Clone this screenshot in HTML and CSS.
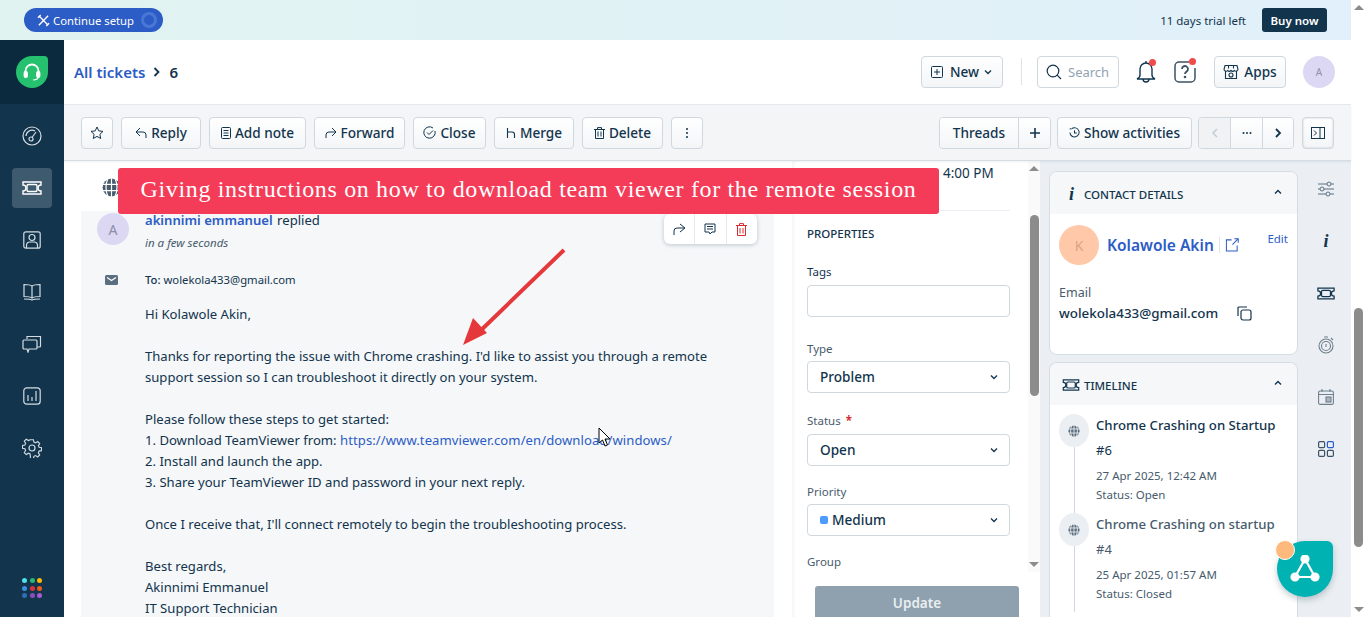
FILE: index.html
```html
<!DOCTYPE html>
<html lang="en">
<head>
    <meta charset="UTF-8">
    <title>Ticket 6</title>
    <link rel="stylesheet" href="styles.css">
</head>
<body>

<svg class="defs" width="0" height="0">
    <symbol id="ticket" viewBox="0 0 20 14">
        <path d="M1 1h18v3a3 3 0 0 0 0 6v3H1v-3a3 3 0 0 0 0-6z" fill="none" stroke="currentColor" stroke-width="1.4"/>
        <rect x="5" y="3.5" width="10" height="7" rx="1.5" fill="none" stroke="currentColor" stroke-width="1.4"/>
    </symbol>
    <symbol id="globe" viewBox="0 0 16 16">
        <circle cx="8" cy="8" r="7.5" fill="currentColor"/>
        <path d="M0 5.3h16M0 10.7h16M8 0v16M5 .5C3 5 3 11 5 15.5M11 .5c2 4.500 2 10.500 0 15" fill="none" stroke="#fff" stroke-width="1"/>
    </symbol>
    <symbol id="chevron" viewBox="0 0 10 10">
        <path d="M2 3.500l3 3 3-3" fill="none" stroke="currentColor" stroke-width="1.300"/>
    </symbol>
</svg>

<div class="app">
    <div class="banner">
        <button class="setup">
            <svg class="setup-icon" width="13" height="13" viewBox="0 0 14 14" fill="none" stroke="#fff" stroke-width="1.500"><path d="M2 2l10 10M12 2L2 12M1 4l3-3M10 13l3-3"/></svg>
            Continue setup
            <span class="setup-ring"></span>
        </button>
        <div class="trial">
            <span>11 days trial left</span>
            <button class="buy">Buy now</button>
        </div>
    </div>

    <div class="shell">
        <nav class="sidebar">
            <div class="logo">
                <div class="logo-mark">
                    <svg width="20" height="20" viewBox="0 0 20 20" fill="none" stroke="#fff" stroke-width="1.800"><path d="M3.500 12V9a6.500 6.500 0 0 1 13 0v3"/><rect x="2.500" y="10" width="2.500" height="5" rx="1" fill="#fff"/><rect x="15" y="10" width="2.500" height="5" rx="1" fill="#fff"/><path d="M16 15c0 2-2 3-5 3" stroke-width="1.200"/></svg>
                </div>
            </div>
            <div class="nav-items">
                <div class="nav-item"><svg width="20" height="20" viewBox="0 0 20 20" fill="none" stroke="currentColor" stroke-width="1.200"><circle cx="10" cy="10" r="9"/><path d="M4 10a6 6 0 0 1 9-5"/><circle cx="9" cy="13" r="2"/><path d="M10 11.500L14 6"/></svg></div>
                <div class="nav-item active"><svg width="20" height="14"><use href="#ticket"/></svg></div>
                <div class="nav-item"><svg width="18" height="18" viewBox="0 0 18 18" fill="none" stroke="currentColor" stroke-width="1.200"><rect x=".8" y=".8" width="16.400" height="16.400" rx="2"/><circle cx="9" cy="6.500" r="3"/><path d="M3.500 17v-2.500c0-2 1.500-3.500 3.500-3.500h4c2 0 3.500 1.500 3.500 3.500V17"/></svg></div>
                <div class="nav-item"><svg width="18" height="18" viewBox="0 0 18 18" fill="none" stroke="currentColor" stroke-width="1.200"><path d="M9 3C7 1.500 4 1.500 1 1.500v12c3 0 6 0 8 1.500 2-1.500 5-1.500 8-1.500v-12C14 1.500 11 1.500 9 3zM9 3v12M1 16c3 0 6 0 8 1 2-1 5-1 8-1"/></svg></div>
                <div class="nav-item"><svg width="20" height="18" viewBox="0 0 20 18" fill="none" stroke="currentColor" stroke-width="1.200"><path d="M5 4V1.500h13.500V11a1 1 0 0 1-1 1H15"/><path d="M2 5h12a1 1 0 0 1 1 1v7a1 1 0 0 1-1 1H7l-1 3-1-3H2a1 1 0 0 1-1-1V6a1 1 0 0 1 1-1z"/></svg></div>
                <div class="nav-item"><svg width="18" height="18" viewBox="0 0 18 18" fill="none" stroke="currentColor" stroke-width="1.200"><rect x=".8" y=".8" width="16.400" height="16.400" rx="3"/><path d="M5 14V8M9 14V10M13 14V4"/></svg></div>
                <div class="nav-item"><svg width="20" height="20" viewBox="0 0 20 20" fill="none" stroke="currentColor" stroke-width="1.200"><circle cx="10" cy="10" r="3"/><path d="M8.500 1.500h3l.5 2.500 1.800.8 2.200-1.400 2.100 2.100-1.400 2.200.8 1.800 2.500.500v3l-2.500.5-.8 1.800 1.400 2.200-2.100 2.100-2.200-1.400-1.800.8-.5 2.500h-3L8 16.500l-1.800-.8L4 17.100 1.900 15l1.400-2.200-.8-1.800L0 10.500v-3l2.500-.5.8-1.800L1.900 3 4 .9l2.200 1.400L8 1.500z" transform="translate(.5 .3) scale(.95)"/></svg></div>
            </div>
            <div class="app-dots">
                <i style="background:#4de1ea"></i><i style="background:#2bb673"></i><i style="background:#ffb800"></i>
                <i style="background:#3d8fdf"></i><i style="background:#d8343f"></i><i style="background:#f05a1a"></i>
                <i style="background:#2f6fb7"></i><i style="background:#8a4fbf"></i><i style="background:#a85cd0"></i>
            </div>
        </nav>

        <div class="main">
            <header class="topbar">
                <div class="crumbs">
                    <a class="crumb-link">All tickets</a>
                    <svg width="10" height="12" viewBox="0 0 10 12" fill="none" stroke="#12344d" stroke-width="1.800"><path d="M2.500 2l4 4-4 4"/></svg>
                    <span>6</span>
                </div>
                <div class="top-actions">
                    <button class="btn btn-new">
                        <svg width="12" height="12" viewBox="0 0 12 12" fill="none" stroke="#12344d" stroke-width="1"><rect x=".5" y=".5" width="11" height="11" rx="1"/><path d="M6 3v6M3 6h6"/></svg>
                        New
                        <svg width="10" height="10"><use href="#chevron"/></svg>
                    </button>
                    <span class="top-divider"></span>
                    <div class="search">
                        <svg width="16" height="16" viewBox="0 0 16 16" fill="none" stroke="#12344d" stroke-width="1.200"><circle cx="7" cy="7" r="5.800"/><path d="M11.200 11.200L15 15"/></svg>
                        <span>Search</span>
                    </div>
                    <div class="top-icon bell">
                        <svg width="20" height="24" viewBox="0 0 20 24" fill="none" stroke="#12344d" stroke-width="1.400"><path d="M10 3a6 6 0 0 0-6 6v6c0 2-1 3-3 4h18c-2-1-3-2-3-4V9a6 6 0 0 0-6-6zM10 1v2M7 19a3 3 0 0 0 6 0z"/></svg>
                        <i class="dot"></i>
                    </div>
                    <div class="top-icon help">
                        <svg width="24" height="22" viewBox="0 0 24 22" fill="none" stroke="#3b5266" stroke-width="1.500"><path d="M16 1H6a4 4 0 0 0-4 4v12a4 4 0 0 0 4 4h12a4 4 0 0 0 4-4V7"/><path d="M9 8a3 3 0 1 1 4.500 2.600c-1 .6-1.500 1.200-1.500 2.400" stroke-width="1.800"/><circle cx="12" cy="16" r=".6" fill="#3b5266"/></svg>
                        <i class="dot"></i>
                    </div>
                    <button class="btn btn-apps">
                        <svg width="16" height="16" viewBox="0 0 16 16" fill="none" stroke="#12344d" stroke-width="1.100"><path d="M2 1.500h12l1 4a2 2 0 0 1-3.500 1 2.500 2.500 0 0 1-3.500 0 2.500 2.500 0 0 1-3.500 0A2 2 0 0 1 1 5.500zM2.500 7.500v7h11v-7M5.500 1.500v3M10.500 1.500v3"/><circle cx="8" cy="11" r="2"/></svg>
                        Apps
                    </button>
                    <div class="avatar avatar-me">A</div>
                </div>
            </header>

            <div class="toolbar">
                <div class="tool-group">
                    <button class="btn tool tool-star"><svg width="14" height="14" viewBox="0 0 14 14" fill="none" stroke="#12344d" stroke-width="1"><path d="M7 1l1.800 3.900 4.200.5-3.100 2.900.8 4.200L7 10.400l-3.700 2.100.8-4.200L1 5.400l4.200-.5z"/></svg></button>
                    <button class="btn tool tool-reply"><svg width="12" height="12" viewBox="0 0 12 12" fill="none" stroke="#12344d" stroke-width="1"><path d="M5 1L1 5l4 4M1 5h7a3 3 0 0 1 3 3v3"/></svg>Reply</button>
                    <button class="btn tool tool-note"><svg width="10" height="12" viewBox="0 0 10 12" fill="none" stroke="#12344d" stroke-width="1"><rect x=".5" y=".5" width="9" height="11" rx="1"/><path d="M2.500 3.500h5M2.500 6h5M2.500 8.500h5"/></svg>Add note</button>
                    <button class="btn tool tool-forward"><svg width="12" height="12" viewBox="0 0 12 12" fill="none" stroke="#12344d" stroke-width="1"><path d="M7 1l4 4-4 4M11 5H4a3 3 0 0 0-3 3v3"/></svg>Forward</button>
                    <button class="btn tool tool-close"><svg width="13" height="13" viewBox="0 0 13 13" fill="none" stroke="#12344d" stroke-width="1"><path d="M12 5a5.700 5.700 0 1 1-2-3"/><path d="M4 6.500l2 2 4-4"/></svg>Close</button>
                    <button class="btn tool tool-merge"><svg width="10" height="12" viewBox="0 0 10 12" fill="none" stroke="#12344d" stroke-width="1.100"><path d="M1.500 1v10M1.500 5H6a2.500 2.500 0 0 1 2.500 2.500V11"/></svg>Merge</button>
                    <button class="btn tool tool-delete"><svg width="11" height="12" viewBox="0 0 11 12" fill="none" stroke="#12344d" stroke-width="1"><path d="M0 2.500h11M3.500 2.500V.6h4v1.900M1.500 2.500v9h8v-9M4 4.500v5M7 4.500v5"/></svg>Delete</button>
                    <button class="btn tool tool-more"><svg width="4" height="12" viewBox="0 0 4 12" fill="#12344d"><circle cx="2" cy="2" r="1"/><circle cx="2" cy="6" r="1"/><circle cx="2" cy="10" r="1"/></svg></button>
                </div>
                <div class="tool-group right">
                    <div class="joined">
                        <button class="seg seg-threads">Threads</button>
                        <button class="seg seg-plus"><svg width="10" height="10" viewBox="0 0 10 10" stroke="#12344d" stroke-width="1.600"><path d="M5 0v10M0 5h10"/></svg></button>
                    </div>
                    <button class="btn tool tool-activity"><svg width="11" height="11" viewBox="0 0 12 12" fill="none" stroke="#12344d" stroke-width="1.100"><path d="M3 1.800A5 5 0 1 1 1 6"/><path d="M6 3.500V6.500H8.500M.8 2l2 .2"/></svg>Show activities</button>
                    <div class="joined pager">
                        <button class="seg seg-page off"><svg width="8" height="12" viewBox="0 0 8 12" fill="none" stroke="#c3ccd4" stroke-width="1.500"><path d="M6 2L2 6l4 4"/></svg></button>
                        <button class="seg seg-page mid"><svg width="10" height="4" viewBox="0 0 10 4" fill="#12344d"><circle cx="1.500" cy="2" r="1"/><circle cx="5" cy="2" r="1"/><circle cx="8.500" cy="2" r="1"/></svg></button>
                        <button class="seg seg-page last"><svg width="8" height="12" viewBox="0 0 8 12" fill="none" stroke="#12344d" stroke-width="1.800"><path d="M2 2l4 4-4 4"/></svg></button>
                    </div>
                    <button class="btn tool tool-panel"><svg width="14" height="12" viewBox="0 0 14 12" fill="none" stroke="#12344d" stroke-width="1"><rect x=".5" y=".5" width="13" height="11"/><path d="M9 .5v11M3 3.500L5.500 6 3 8.500" /></svg></button>
                </div>
            </div>

            <div class="content">
                <section class="ticket">
                    <div class="ticket-head"><svg class="globe-big" width="19" height="19"><use href="#globe"/></svg></div>
                    <div class="thread">
                        <div class="msg-head">
                            <div class="avatar avatar-agent">A</div>
                            <div>
                                <div class="msg-author"><a>akinnimi emmanuel</a> replied</div>
                                <div class="msg-time">in a few seconds</div>
                            </div>
                        </div>
                        <div class="msg-to">
                            <svg width="13" height="10" viewBox="0 0 13 10"><rect width="13" height="10" rx="1.500" fill="#5b6f80"/><path d="M2 2.500l4.500 3 4.500-3" fill="none" stroke="#fff" stroke-width="1.200"/></svg>
                            <div><b>To:</b> wolekola433@gmail.com</div>
                        </div>
                        <div class="msg-body">
                            <p>Hi Kolawole Akin,</p>
                            <p>Thanks for reporting the issue with Chrome crashing. I'd like to assist you through a remote<br>support session so I can troubleshoot it directly on your system.</p>
                            <p>Please follow these steps to get started:<br>1. Download TeamViewer from: <a>https://www.teamviewer.com/en/download/windows/</a><br>2. Install and launch the app.<br>3. Share your TeamViewer ID and password in your next reply.</p>
                            <p>Once I receive that, I'll connect remotely to begin the troubleshooting process.</p>
                            <p>Best regards,<br>Akinnimi Emmanuel<br>IT Support Technician</p>
                        </div>
                        <div class="msg-actions">
                            <span><svg width="14" height="13" viewBox="0 0 14 13" fill="none" stroke="#12344d" stroke-width="1"><path d="M8 1l5 4-5 4M13 5H5a3 3 0 0 0-3 3v4"/></svg></span>
                            <span><svg width="12" height="12" viewBox="0 0 12 12" fill="none" stroke="#12344d" stroke-width="1"><path d="M1 1h10v8H8l-2 2-1-2H1zM3 3.500h6M3 6h6"/></svg></span>
                            <span><svg width="11" height="13" viewBox="0 0 11 13" fill="none" stroke="#d72d30" stroke-width="1"><path d="M0 2.500h11M3.500 2.500V.6h4v1.900M1.500 2.500v10h8v-10M4 5v5.500M7 5v5.500"/></svg></span>
                        </div>
                    </div>
                </section>

                <section class="props">
                    <div class="props-scroll">
                        <div class="props-main">
                            <div class="props-time">4:00 PM</div>
                            <h3 class="props-title">PROPERTIES</h3>
                            <div class="field field-tags">
                                <label>Tags</label>
                                <div class="input"></div>
                            </div>
                            <div class="field field-type">
                                <label>Type</label>
                                <div class="input select">Problem<svg width="10" height="10"><use href="#chevron"/></svg></div>
                            </div>
                            <div class="field field-status">
                                <label>Status <em>*</em></label>
                                <div class="input select">Open<svg width="10" height="10"><use href="#chevron"/></svg></div>
                            </div>
                            <div class="field field-priority">
                                <label>Priority</label>
                                <div class="input select priority"><span><i class="prio-dot"></i>Medium</span><svg width="10" height="10"><use href="#chevron"/></svg></div>
                            </div>
                            <div class="field field-group">
                                <label>Group</label>
                            </div>
                        </div>
                        <div class="bar bar-props">
                            <i class="arrow-up"></i>
                            <div class="bar-track"><div class="bar-thumb"></div></div>
                            <i class="arrow-down"></i>
                        </div>
                    </div>
                    <div class="props-foot"><button class="update">Update</button></div>
                </section>

                <aside class="side">
                    <div class="side-cards">
                        <div class="card card-contact">
                            <div class="card-head">
                                <span class="info-i">i</span>
                                <span class="card-title">CONTACT DETAILS</span>
                                <svg class="caret" width="10" height="8" viewBox="0 0 10 8" fill="none" stroke="#12344d" stroke-width="1.400"><path d="M2 5.500l3-3 3 3"/></svg>
                            </div>
                            <div class="contact-main">
                                <div class="avatar avatar-contact">K</div>
                                <a class="contact-name">Kolawole Akin</a>
                                <span class="name-sep"></span>
                                <svg width="14" height="14" viewBox="0 0 15 15" fill="none" stroke="#2c5cc5" stroke-width="1.100"><path d="M7 2H1.500v12h11.500V8M8 7l6-6M10 .8h4.200V5"/></svg>
                                <a class="edit">Edit</a>
                            </div>
                            <div class="contact-label">Email</div>
                            <div class="contact-email">
                                <span>wolekola433@gmail.com</span>
                                <svg width="15" height="15" viewBox="0 0 15 15" fill="none" stroke="#12344d" stroke-width="1.200"><rect x="4" y="4" width="10" height="10" rx="2"/><path d="M10 1H2a1 1 0 0 0-1 1v8"/></svg>
                            </div>
                        </div>
                        <div class="card card-timeline">
                            <div class="card-head">
                                <svg class="tl-ticket" width="18" height="12" color="#12344d"><use href="#ticket"/></svg>
                                <span class="card-title">TIMELINE</span>
                                <svg class="caret" width="10" height="8" viewBox="0 0 10 8" fill="none" stroke="#12344d" stroke-width="1.400"><path d="M2 5.500l3-3 3 3"/></svg>
                            </div>
                            <div class="timeline">
                                <div class="tl-item">
                                    <div class="tl-rail"><span class="tl-dot"><svg width="12" height="12" color="#5b6f80"><use href="#globe"/></svg></span></div>
                                    <div class="tl-text">
                                        <div class="tl-title">Chrome Crashing on Startup</div>
                                        <div class="tl-num">#6</div>
                                        <div class="tl-date">27 Apr 2025, 12:42 AM</div>
                                        <div class="tl-status">Status: Open</div>
                                    </div>
                                </div>
                                <div class="tl-item muted">
                                    <div class="tl-rail"><span class="tl-dot"><svg width="12" height="12" color="#5b6f80"><use href="#globe"/></svg></span></div>
                                    <div class="tl-text">
                                        <div class="tl-title">Chrome Crashing on startup</div>
                                        <div class="tl-num">#4</div>
                                        <div class="tl-date">25 Apr 2025, 01:57 AM</div>
                                        <div class="tl-status">Status: Closed</div>
                                    </div>
                                </div>
                            </div>
                        </div>
                    </div>
                    <div class="side-icons">
                        <span><svg width="18" height="16" viewBox="0 0 18 16" fill="none" stroke="#5b6f80" stroke-width="1"><path d="M1 3h9M14 3h3M1 8h2M7 8h10M1 13h8M13 13h4"/><circle cx="12" cy="3" r="2"/><circle cx="5" cy="8" r="2"/><circle cx="11" cy="13" r="2"/></svg></span>
                        <span class="info-i">i</span>
                        <span><svg width="18" height="13" color="#12344d"><use href="#ticket"/></svg></span>
                        <span><svg width="16" height="18" viewBox="0 0 16 18" fill="none" stroke="#6f7f8c" stroke-width="1.100"><circle cx="8" cy="10" r="7"/><circle cx="8" cy="10" r="4.500"/><path d="M8 8v3M6 1h4M13 2l2 2"/></svg></span>
                        <span><svg width="16" height="16" viewBox="0 0 16 16" fill="none" stroke="#6f7f8c" stroke-width="1.100"><rect x=".6" y="2" width="14.800" height="13.400" rx="1.500"/><path d="M.6 5.500h14.800M4 0v3M12 0v3"/><rect x="8" y="8" width="5" height="5" fill="#aab5bf"/></svg></span>
                        <span><svg width="16" height="16" viewBox="0 0 16 16" fill="none" stroke="#3b5266" stroke-width="1.200"><rect x=".6" y=".6" width="6" height="6" rx="1.200"/><rect x="9.400" y=".6" width="6" height="6" rx="1.200" stroke="#2c5cc5"/><rect x=".6" y="9.400" width="6" height="6" rx="1.200"/><rect x="9.400" y="9.400" width="6" height="6" rx="1.200"/></svg></span>
                    </div>
                </aside>
            </div>
        </div>
    </div>
</div>

<div class="bar bar-page">
    <i class="arrow-up"></i>
    <div class="bar-track"><div class="bar-thumb"></div></div>
    <i class="arrow-down"></i>
</div>

<!-- things drawn over the screen recording -->
<div class="caption">Giving instructions on how to download team viewer for the remote session</div>
<svg class="pointer-arrow" width="120" height="110" viewBox="0 0 120 110">
    <path d="M110 5L22 90" stroke="#e5383b" stroke-width="4" fill="none"/>
    <path d="M9 100l10-27 14 15z" fill="#e5383b"/>
</svg>
<svg class="cursor" width="14" height="21" viewBox="0 0 14 21">
    <path d="M1 1v15l3.500-3 2.500 6 2.500-1-2.500-6h5z" fill="#fff" stroke="#000" stroke-width="1"/>
</svg>
<div class="fab">
    <svg width="30" height="28" viewBox="0 0 30 28" fill="none" stroke="#fff" stroke-width="2.200"><path d="M15 4L5 22h20z"/><circle cx="15" cy="4" r="3.500" fill="#fff"/><circle cx="5" cy="22" r="3.500" fill="#fff"/><circle cx="25" cy="22" r="3.500" fill="#fff"/></svg>
    <i class="fab-dot"></i>
</div>

</body>
</html>
```

FILE: styles.css
```css
* {
    box-sizing: border-box;
}

html, body {
    margin: 0;
    height: 617px;
    overflow: hidden;
}

body {
    display: flex;
    font-family: "Noto Sans", "Open Sans", sans-serif;
    color: #12344d;
    background: #fff;
    font-size: 13px;
}

button {
    font-family: inherit;
    cursor: pointer;
}

svg {
    flex: none;
    display: block;
}

.defs {
    position: absolute;
}

.app {
    width: 1351px;
    height: 617px;
    display: flex;
    flex-direction: column;
}

/* top banner */
.banner {
    height: 40px;
    flex: none;
    display: flex;
    justify-content: space-between;
    align-items: center;
    padding: 0 24px;
    background: linear-gradient(90deg, #e0f3f0, #e1f0fa);
}

.setup {
    width: 139px;
    height: 24px;
    border: 0;
    border-radius: 12px;
    background: #2c5cc5;
    color: #fff;
    font-size: 11.3px;
    display: flex;
    align-items: center;
    padding: 0 0 0 13px;
    gap: 3px;
}

.setup-ring {
    width: 16px;
    height: 16px;
    margin-left: 4px;
    border-radius: 50%;
    border: 3px solid #4a76d6;
}

.trial {
    display: flex;
    align-items: center;
    gap: 16px;
    font-size: 11.5px;
}

.buy {
    width: 65px;
    height: 24px;
    border: 0;
    border-radius: 3px;
    background: #12344d;
    color: #fff;
    font-size: 11.5px;
    font-weight: 600;
    padding: 0;
}

.shell {
    flex: 1;
    display: flex;
    min-height: 0;
}

/* left nav */
.sidebar {
    width: 64px;
    flex: none;
    background: #12344d;
    color: #d5dde3;
    display: flex;
    flex-direction: column;
}

.logo {
    height: 64px;
    background: #0c2a3e;
    display: flex;
    align-items: center;
    justify-content: center;
}

.logo-mark {
    width: 32px;
    height: 32px;
    background: #25c16f;
    border-radius: 16px 4px 16px 16px;
    display: flex;
    align-items: center;
    justify-content: center;
}

.nav-items {
    flex: 1;
    padding-top: 12px;
}

.nav-item {
    width: 40px;
    height: 40px;
    margin: 0 12px 12px;
    border-radius: 4px;
    display: flex;
    align-items: center;
    justify-content: center;
}

.nav-item.active {
    background: #3e5a6e;
    color: #fff;
}

.app-dots {
    display: grid;
    grid-template-columns: repeat(3, 5px);
    gap: 2.5px;
    padding: 0 0 19px 22px;
}

.app-dots i {
    width: 5px;
    height: 5px;
    border-radius: 50%;
}

.main {
    flex: 1;
    min-width: 0;
    display: flex;
    flex-direction: column;
}

/* header row */
.topbar {
    height: 65px;
    flex: none;
    display: flex;
    align-items: center;
    justify-content: space-between;
    padding: 0 16px 1px 10px;
    border-bottom: 1px solid #e6eaee;
    background: #fff;
}

.crumbs {
    display: flex;
    align-items: center;
    gap: 7px;
    font-size: 15px;
    font-weight: 600;
}

.crumb-link {
    color: #2c5cc5;
}

.top-actions {
    display: flex;
    align-items: center;
}

.btn {
    height: 32px;
    border: 1px solid #cfd7df;
    border-radius: 4px;
    background: linear-gradient(#fff, #f3f5f7);
    color: #12344d;
    font-size: 13.6px;
    font-weight: 500;
    display: flex;
    align-items: center;
    justify-content: center;
    padding: 0;
}

.btn-new {
    width: 82px;
    gap: 7px;
}

.btn-new svg:last-child {
    margin-left: -3px;
}

.top-divider {
    width: 1px;
    height: 27px;
    background: #dfe3e7;
    margin: 0 15px 0 18px;
}

.search {
    width: 82px;
    height: 32px;
    border: 1px solid #cfd7df;
    border-radius: 4px;
    display: flex;
    align-items: center;
    gap: 6px;
    padding-left: 8px;
    font-size: 13px;
    color: #92a2b1;
}

.top-icon {
    position: relative;
}

.bell {
    margin: 0 0 0 17px;
}

.help {
    margin: 0 17px 0 17px;
}

.dot {
    position: absolute;
    width: 7px;
    height: 7px;
    border-radius: 50%;
    background: #f04a4a;
    top: -1px;
    right: 0;
}

.help .dot {
    right: 1px;
    top: -3px;
}

.btn-apps {
    width: 72px;
    gap: 5px;
}

.avatar {
    border-radius: 50%;
    display: flex;
    align-items: center;
    justify-content: center;
    flex: none;
}

.avatar-me {
    width: 32px;
    height: 32px;
    margin-left: 17px;
    background: #dcd8f3;
    color: #8c8fa8;
    font-size: 10px;
}

/* toolbar */
.toolbar {
    height: 56px;
    flex: none;
    display: flex;
    align-items: center;
    justify-content: space-between;
    padding: 0 17px;
    background: #f3f5f7;
    border-bottom: 1px solid #d5dde4;
    box-shadow: 0 1px 2px rgba(18, 52, 77, .08);
    position: relative;
}

.tool-group {
    display: flex;
    align-items: center;
    gap: 8px;
}

.tool {
    gap: 4px;
}

.tool-star { width: 32px; }
.tool-reply { width: 80px; }
.tool-note { width: 97px; }
.tool-forward { width: 91px; }
.tool-close { width: 73px; }
.tool-merge { width: 80px; }
.tool-delete { width: 81px; }
.tool-more { width: 32px; }

.tool-activity {
    width: 135px;
    margin-right: -2px;
}

.tool-panel {
    width: 32px;
    box-shadow: inset 0 0 2px #b9c4cd;
}

.joined {
    display: flex;
    height: 32px;
    border: 1px solid #cfd7df;
    border-radius: 4px;
    overflow: hidden;
    margin-right: -2px;
}

.pager {
    margin: 0;
}

.seg {
    border: 0;
    border-left: 1px solid #cfd7df;
    background: linear-gradient(#fff, #f3f5f7);
    color: #12344d;
    font-size: 13.6px;
    font-weight: 500;
    padding: 0;
    display: flex;
    align-items: center;
    justify-content: center;
}

.seg:first-child {
    border-left: 0;
}

.seg-threads { width: 78px; }
.seg-plus { width: 32px; }
.seg-page { width: 31px; }
.seg-page.mid { width: 32px; }
.seg-page.off { background: #f0f2f4; }

/* content columns */
.content {
    flex: 1;
    min-height: 0;
    display: flex;
    overflow: hidden;
}

.ticket {
    width: 728px;
    flex: none;
    padding: 0 18px 0 17px;
    display: flex;
    flex-direction: column;
    background: #fff;
}

.ticket-head {
    height: 50px;
    flex: none;
    padding: 17px 0 0 21px;
}

.globe-big {
    color: #475b6c;
}

.thread {
    flex: 1;
    background: #f5f7f9;
    position: relative;
    overflow: hidden;
}

.msg-head {
    display: flex;
    gap: 16px;
    padding-left: 16px;
}

.avatar-agent {
    width: 32px;
    height: 32px;
    margin-top: 2px;
    background: #dcd8f3;
    color: #8c8fa8;
    font-size: 14px;
}

.msg-author {
    font-size: 13.1px;
    line-height: 18px;
}

.msg-author a {
    color: #2c5cc5;
    font-weight: 600;
    margin-right: 1px;
}

.msg-time {
    margin-top: 6px;
    font-size: 11.5px;
    line-height: 16px;
    font-style: italic;
    color: #475b6c;
}

.msg-to {
    display: flex;
    align-items: center;
    gap: 27px;
    padding-left: 24px;
    margin-top: 21px;
    font-size: 11.3px;
    line-height: 16px;
}

.msg-to b {
    font-weight: 500;
}

.msg-body {
    margin: 16px 0 0 64px;
    font-size: 13.1px;
    line-height: 21px;
}

.msg-body p {
    margin: 0 0 21px;
}

.msg-body a {
    color: #2c5cc5;
    letter-spacing: .07px;
}

.msg-actions {
    position: absolute;
    top: 3px;
    left: 583px;
    width: 93px;
    height: 30px;
    display: flex;
    background: #fff;
    border-radius: 6px;
    box-shadow: 0 1px 4px rgba(18, 52, 77, .25);
}

.msg-actions span {
    flex: 1;
    display: flex;
    align-items: center;
    justify-content: center;
    border-left: 1px solid #e6eaee;
}

.msg-actions span:first-child {
    border-left: 0;
}

/* properties */
.props {
    width: 248px;
    flex: none;
    display: flex;
    flex-direction: column;
    background: #fff;
    box-shadow: inset 4px 0 4px -3px #eef1f4;
}

.props-scroll {
    height: 411px;
    flex: none;
    display: flex;
}

.props-main {
    width: 236px;
    flex: none;
    padding: 0 18px 0 15px;
}

.props-time {
    height: 50px;
    padding: 3px 0 0 136px;
    line-height: 18px;
    font-size: 13.5px;
    border-bottom: 1px solid #ebeff3;
    white-space: nowrap;
}

.props-title {
    margin: 15px 0 0;
    font-size: 11.5px;
    line-height: 16px;
    font-weight: 500;
}

.field label {
    display: block;
    font-size: 11.5px;
    line-height: 16px;
    color: #475b6c;
}

.field em {
    color: #d72d30;
    font-style: normal;
    font-weight: 700;
    margin-left: 2px;
}

.field-tags { margin-top: 22px; }
.field-tags label { color: #12344d; margin-bottom: 5px; }
.field-type { margin-top: 24px; }
.field-type label { margin-bottom: 4px; }
.field-status { margin-top: 20px; }
.field-status label { margin-bottom: 5px; }
.field-priority { margin-top: 18px; }
.field-priority label { margin-bottom: 4px; }
.field-group { margin-top: 18px; }

.input {
    width: 203px;
    height: 32px;
    border: 1px solid #cfd7df;
    border-radius: 4px;
    background: #fff;
}

.select {
    display: flex;
    align-items: center;
    justify-content: space-between;
    padding: 0 10px 1px 12px;
    font-size: 13.6px;
    font-weight: 500;
}

.priority span {
    display: flex;
    align-items: center;
    gap: 4px;
}

.prio-dot {
    width: 8px;
    height: 8px;
    border-radius: 2px;
    background: #4d9bff;
}

.props-foot {
    flex: 1;
    padding: 14px 21px 0 23px;
}

/* cut off by the bottom of the window */
.update {
    width: 204px;
    height: 31px;
    border: 0;
    border-radius: 3px 3px 0 0;
    padding: 3px 0 0;
    background: #8fa1ae;
    color: #e9eef1;
    font-size: 13.5px;
    font-weight: 600;
}

/* scrollbars */
.bar {
    display: flex;
    flex-direction: column;
    align-items: center;
}

.bar-props {
    width: 12px;
    background: #fafafa;
}

.bar-page {
    width: 15px;
    height: 617px;
    background: #fff;
    flex: none;
}

.bar-track {
    flex: 1;
    width: 100%;
}

.bar-thumb {
    width: 9px;
    margin: 0 auto;
    background: #8c8c8c;
    border-radius: 5px;
}

.bar-props .bar-thumb {
    height: 181px;
    margin-top: 39px;
}

.bar-page .bar-thumb {
    height: 239px;
    margin-top: 293px;
}

.arrow-up, .arrow-down {
    width: 0;
    height: 0;
    flex: none;
    border-left: 5px solid transparent;
    border-right: 5px solid transparent;
    margin: 5px 0;
}

.arrow-up {
    border-bottom: 5px solid #8c8c8c;
}

.arrow-down {
    border-top: 5px solid #8c8c8c;
}

/* right side */
.side {
    flex: 1;
    min-width: 0;
    display: flex;
    background: #ebeff3;
    overflow: hidden;
}

.side-cards {
    width: 249px;
    flex: none;
    margin: 10px 0 0 9px;
    display: flex;
    flex-direction: column;
    gap: 7px;
}

.card {
    background: #fff;
    border: 1px solid #d5dde4;
    border-radius: 8px;
    overflow: hidden;
    flex: none;
}

.card-contact {
    height: 184px;
}

.card-timeline {
    height: 255px;
    border-bottom: 0;
    border-radius: 8px 8px 0 0;
}

.card-head {
    height: 42px;
    background: #f5f7f9;
    display: flex;
    align-items: center;
    padding: 2px 14px 0 17px;
    gap: 8px;
}

.card-timeline .card-head {
    padding-left: 12px;
    gap: 4px;
}

.card-title {
    flex: 1;
    font-size: 11.5px;
    font-weight: 500;
}

.caret {
    margin-top: -4px;
}

.info-i {
    font-family: "Liberation Serif", serif;
    font-weight: 700;
    font-style: italic;
    font-size: 18px;
    line-height: 18px;
    width: 9px;
    text-align: center;
}

.contact-main {
    display: flex;
    align-items: center;
    padding: 11px 0 0 9px;
    position: relative;
}

.avatar-contact {
    width: 40px;
    height: 40px;
    background: #ffc9a9;
    color: #d9a484;
    font-size: 14px;
    margin-right: 8px;
}

.contact-name {
    color: #2c5cc5;
    font-size: 15.5px;
    font-weight: 600;
    white-space: nowrap;
}

.name-sep {
    width: 1px;
    height: 16px;
    background: #dfe3e7;
    margin: 0 5px;
}

.edit {
    position: absolute;
    right: 9px;
    top: 17px;
    color: #2c5cc5;
    font-size: 11.5px;
}

.contact-label {
    margin: 18px 0 0 9px;
    font-size: 12.5px;
    line-height: 20px;
    color: #475b6c;
}

.contact-email {
    margin: 0 0 0 9px;
    display: flex;
    align-items: center;
    gap: 19px;
    font-size: 13.4px;
    line-height: 20px;
    font-weight: 500;
}

.timeline {
    padding: 9px 0 0 9px;
}

.tl-item {
    display: flex;
    gap: 7px;
}

.tl-item.muted .tl-title,
.tl-item.muted .tl-num {
    color: #475b6c;
}

.tl-rail {
    width: 30px;
    flex: none;
    display: flex;
    justify-content: center;
    background: linear-gradient(#cfd7df, #cfd7df) center / 1px 100% no-repeat;
}

.tl-dot {
    width: 30px;
    height: 33px;
    border-radius: 50%;
    background: #ebeff3;
    display: flex;
    align-items: center;
    justify-content: center;
}

.tl-text {
    flex: 1;
    min-width: 0;
    height: 99px;
}

.tl-title {
    font-size: 13.2px;
    line-height: 22px;
    font-weight: 500;
}

.tl-num {
    margin-top: 3px;
    font-size: 13px;
    line-height: 22px;
}

.tl-date {
    margin-top: 6px;
    font-size: 11.5px;
    line-height: 18px;
    color: #475b6c;
}

.tl-status {
    margin-top: 1px;
    font-size: 11.5px;
    line-height: 18px;
    color: #475b6c;
}

.side-icons {
    width: 53px;
    flex: none;
    padding: 2px 0 0 3px;
}

.side-icons span {
    height: 52px;
    display: flex;
    align-items: center;
    justify-content: center;
}

.side-icons .info-i {
    width: auto;
}

/* overlays from the recording */
.caption {
    position: absolute;
    left: 118px;
    top: 168px;
    width: 821px;
    height: 46px;
    background: #f43b57;
    border-radius: 3px;
    color: #fff;
    font-family: "Liberation Serif", serif;
    font-size: 24px;
    letter-spacing: .65px;
    line-height: 43px;
    text-align: center;
    white-space: nowrap;
}

.pointer-arrow {
    position: absolute;
    left: 454px;
    top: 245px;
}

.cursor {
    position: absolute;
    left: 598px;
    top: 427px;
}

.fab {
    position: absolute;
    left: 1277px;
    top: 541px;
    width: 56px;
    height: 56px;
    background: #00b2b2;
    border-radius: 28px 6px 28px 28px;
    box-shadow: 0 3px 6px rgba(18, 52, 77, .25);
    display: flex;
    align-items: center;
    justify-content: center;
}

.fab-dot {
    position: absolute;
    left: -2px;
    top: -1px;
    width: 20px;
    height: 20px;
    border-radius: 50%;
    border: 1px solid #fff;
    background: #ffb97c;
}
```
